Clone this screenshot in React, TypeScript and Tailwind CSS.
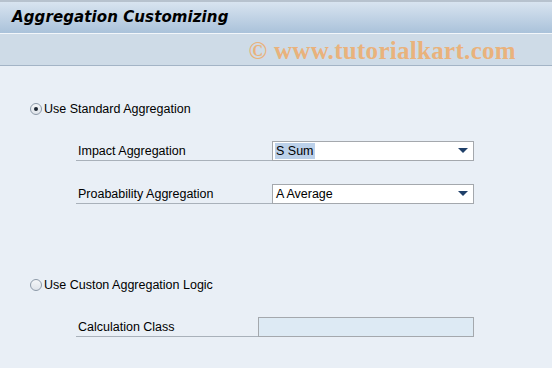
import React from "react";

const font = { fontFamily: '"Liberation Sans", Arial, sans-serif' };

function Radio({ checked }: { checked?: boolean }) {
  return (
    <span className="relative inline-block w-[12px] h-[12px] rounded-full border border-[#8d9aa8] bg-gradient-to-b from-[#f4f6f8] to-[#dfe4ea]">
      {checked && (
        <span className="absolute left-[3px] top-[3px] w-[4px] h-[4px] rounded-full bg-[#1d2733]" />
      )}
    </span>
  );
}

function Arrow() {
  return (
    <svg width="10" height="6" viewBox="0 0 10 6" className="mr-[5px]">
      <path d="M0 0 H10 L5 5 Z" fill="#1f3f69" />
    </svg>
  );
}

function FieldRow({
  label,
  labelW,
  children,
}: {
  label: string;
  labelW: string;
  children: React.ReactNode;
}) {
  return (
    <div className="flex items-end ml-[76px]">
      <div className={`${labelW} border-b border-[#a9b1ba] h-[20px] flex items-center pl-[2px] pt-[1px] text-[12.5px] text-black`}>
        {label}
      </div>
      {children}
    </div>
  );
}

export default function App() {
  return (
    <div className="w-[552px] h-[368px] overflow-hidden bg-[#e9eff6]" style={font}>
      <div className="h-[33px] border-t-2 border-[#b7c2ce] bg-gradient-to-b from-[#d8e4f0] to-[#aac2da] flex items-center pl-[12px]">
        <span className="font-bold italic text-black tracking-[0.1px]" style={{ fontFamily: '"DejaVu Sans", Verdana, sans-serif', fontSize: 15 }}>
          Aggregation Customizing
        </span>
      </div>
      <div className="h-[1px] bg-[#f2f6fa]" />
      <div className="h-[32px] bg-[#cedbe7] border-b border-[#a3b4c6] flex items-center justify-end pr-[36px] pt-[3px]">
        <span
          className="text-[25px] font-bold text-[#e9b27c] tracking-[0.3px]"
          style={{ fontFamily: '"Liberation Serif", "Times New Roman", serif' }}
        >
          © www.tutorialkart.com
        </span>
      </div>

      <div className="pt-[36px]">
        <div className="flex items-center ml-[30px] h-[14px] gap-[2px] text-[12.5px] text-black">
          <Radio checked />
          <span>Use Standard Aggregation</span>
        </div>

        <div className="mt-[25px]">
          <FieldRow label="Impact Aggregation" labelW="w-[196px]">
            <div className="w-[202px] h-[20px] border border-[#a4a8ad] bg-white flex items-center justify-between">
              <span className="ml-[2px] px-[1px] bg-[#bcd1ea] text-[12.5px] leading-[16px] text-black">S Sum</span>
              <Arrow />
            </div>
          </FieldRow>
        </div>

        <div className="mt-[23px]">
          <FieldRow label="Proabability Aggregation" labelW="w-[196px]">
            <div className="w-[202px] h-[20px] border border-[#a4a8ad] bg-white flex items-center justify-between">
              <span className="ml-[3px] text-[12.5px] text-black">A Average</span>
              <Arrow />
            </div>
          </FieldRow>
        </div>

        <div className="flex items-center ml-[30px] mt-[74px] h-[14px] gap-[2px] text-[12.5px] text-black">
          <Radio />
          <span>Use Custon Aggregation Logic</span>
        </div>

        <div className="mt-[25px]">
          <FieldRow label="Calculation Class" labelW="w-[182px]">
            <div className="w-[216px] h-[20px] border border-[#a4a8ad] bg-[#ddeaf4]" />
          </FieldRow>
        </div>
      </div>
    </div>
  );
}
